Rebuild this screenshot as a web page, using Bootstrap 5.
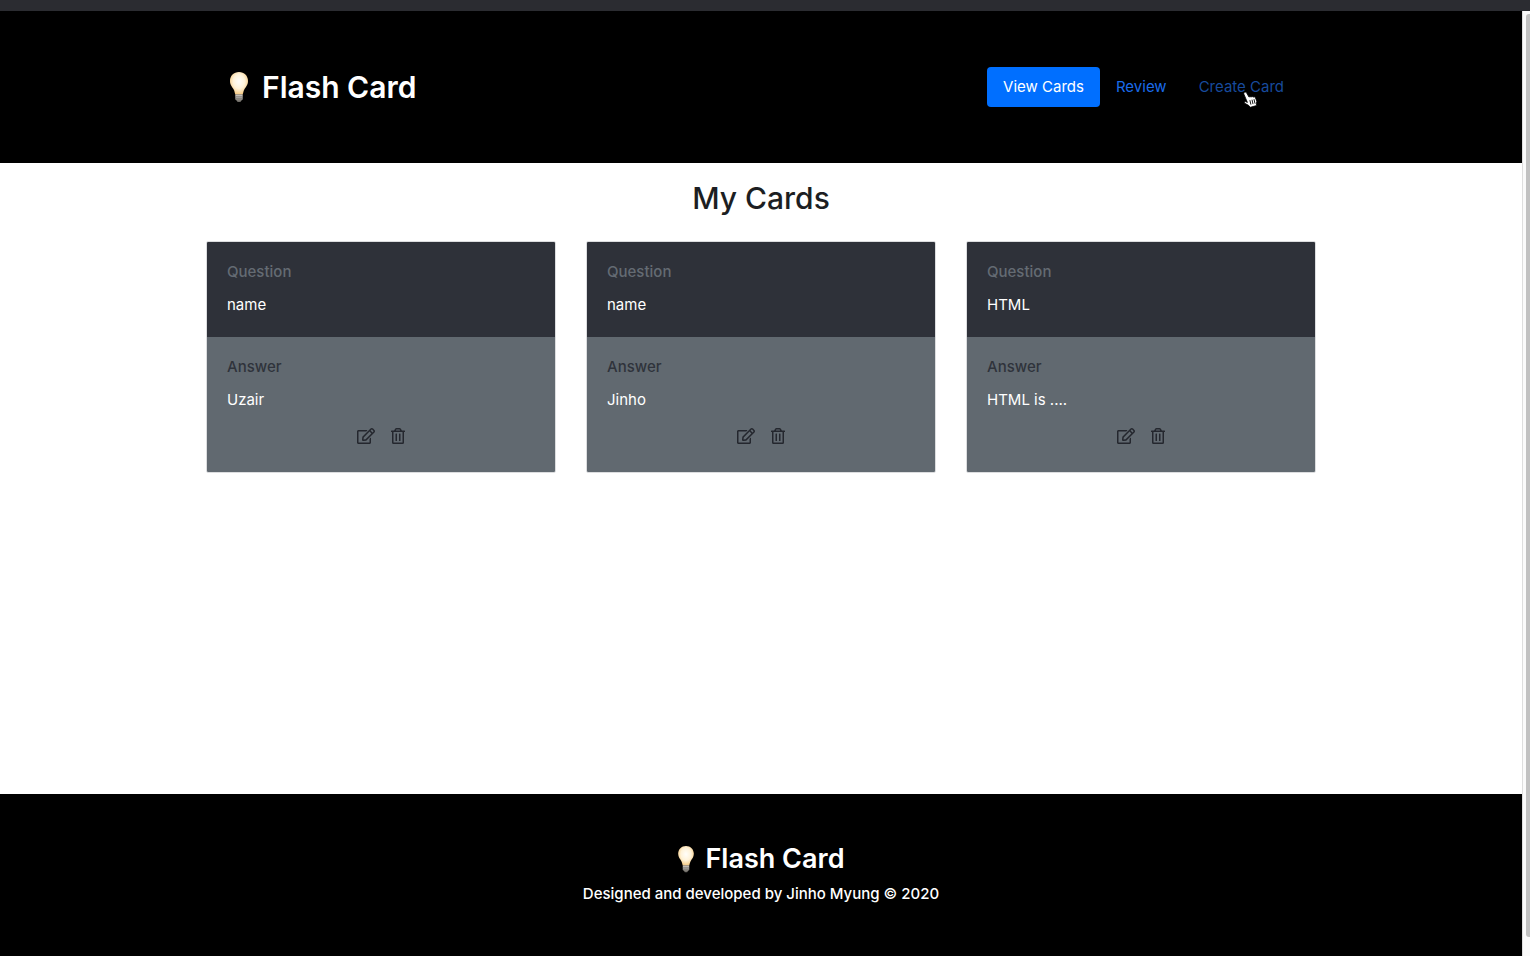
<!DOCTYPE html>
<html lang="en">
<head>
<meta charset="utf-8">
<meta name="viewport" content="width=device-width, initial-scale=1">
<title>Flash Card</title>
<link href="https://cdn.jsdelivr.net/npm/bootstrap@5.3.0/dist/css/bootstrap.min.css" rel="stylesheet">
<style>
  body { font-family: Inter, "Liberation Sans", sans-serif; font-size: 15px; line-height: 24px; color: #1c1e22; background: #fff; }
  .window-strip { height: 11px; background: #2b2c31; }
  .container { max-width: 1140px; --bs-gutter-x: 30px; }
  .site-header { background: #000; padding: 56px 0; }
  .brand { font-size: 30px; line-height: 38px; font-weight: 600; color: #fff; gap: 14px; }
  .brand-bulb { width: 18px; height: 31px; }
  .site-footer .brand { font-size: 27px; line-height: 34px; gap: 12px; }
  .site-footer .brand-bulb { width: 16px; height: 27px; }
  .nav-pills { --bs-nav-pills-border-radius: 4px; --bs-nav-link-color: #1a6bea; --bs-nav-link-hover-color: #174a9c; --bs-nav-pills-link-active-bg: #006fff; }
  .nav-pills .nav-link.hovered { color: #174a9c; }
  .page-title { font-size: 30px; line-height: 38px; font-weight: 500; }
  .card-row { --bs-gutter-x: 30px; }
  .flash { border-radius: 2px; border-color: #dcdddf; overflow: hidden; color: #fff; }
  .flash .card-body { padding: 20px; }
  .face-question { background: #2e3139; }
  .face-answer { background: #616970; }
  .face-title { font-size: 15px; line-height: 19px; font-weight: 500; margin-bottom: 12px; }
  .face-question .face-title { color: #646b73; }
  .face-answer .face-title { color: #2f333b; }
  .face-answer .btn { color: #24272e; line-height: 16px; }
  .site-footer { background: #000; color: #fff; padding: 48px 0 53px; }
  .credit { font-size: 15px; line-height: 19px; font-weight: 500; }
  .scroll-track { width: 8px; background: #fafafa; border-left: 1px solid #dedede; padding: 3px 0 19px 3px; }
  .scroll-thumb { background: #c1c1c1; border-radius: 3px 0 0 3px; }
  .pointer { width: 15px; height: 17px; left: 60px; top: 24px; }
</style>
</head>
<body class="d-flex flex-column min-vh-100">
<svg class="position-absolute" width="0" height="0" aria-hidden="true">
  <defs>
    <radialGradient id="glow" cx=".5" cy=".42" r=".58">
      <stop offset="0" stop-color="#fffefa"/><stop offset=".55" stop-color="#fff3d9"/><stop offset="1" stop-color="#f5c982"/>
    </radialGradient>
    <linearGradient id="base" x2="0" y2="1"><stop offset="0" stop-color="#d0cbc5"/><stop offset="1" stop-color="#68655f"/></linearGradient>
  </defs>
  <symbol id="bulb" viewBox="0 0 18 31">
    <path fill="url(#glow)" d="M9 0C3.800 0 0 3.800 0 9c0 4 2.300 6 3.700 8.500 1 1.900 1 3.500 1.600 5h7.400c.6-1.500.6-3.100 1.600-5C15.700 15 18 13 18 9c0-5.200-3.800-9-9-9z"/>
    <path fill="url(#base)" d="M5.300 22.500h7.400v5l-1.500 1.300L10.400 30H7.600l-.8-1.200-1.500-1.300z"/>
    <path stroke="#77736e" stroke-width=".6" d="M5.300 24.600h7.400M5.300 26.600h7.400"/>
  </symbol>
  <symbol id="edit" viewBox="0 0 576 512"><path fill="currentColor" d="M402.300 344.900l32-32c5-5 13.700-1.500 13.700 5.700V464c0 26.500-21.500 48-48 48H48c-26.500 0-48-21.500-48-48V112c0-26.500 21.500-48 48-48h273.500c7.100 0 10.700 8.600 5.700 13.700l-32 32c-1.500 1.500-3.500 2.300-5.700 2.300H48v352h352V350.500c0-2.100.8-4.100 2.300-5.600zm156.600-201.800L296.300 405.700l-90.400 10c-26.200 2.900-48.500-19.200-45.600-45.600l10-90.400L432.900 17.100c22.900-22.900 59.900-22.900 82.700 0l43.200 43.200c22.900 22.900 22.900 60 .1 82.800zM460.100 174L402 115.900 216.200 301.800l-7.300 65.300 65.300-7.300L460.100 174zm64.800-79.700l-43.200-43.200c-4.100-4.100-10.800-4.100-14.800 0L436 82l58.100 58.100 30.900-30.900c4-4.200 4-10.800-.1-14.900z"/></symbol>
  <symbol id="trash" viewBox="0 0 448 512"><path fill="currentColor" d="M268 416h24a12 12 0 0 0 12-12V188a12 12 0 0 0-12-12h-24a12 12 0 0 0-12 12v216a12 12 0 0 0 12 12zM432 80h-82.410l-34-56.700A48 48 0 0 0 274.410 0H173.590a48 48 0 0 0-41.160 23.300L98.410 80H16A16 16 0 0 0 0 96v16a16 16 0 0 0 16 16h16v336a48 48 0 0 0 48 48h288a48 48 0 0 0 48-48V128h16a16 16 0 0 0 16-16V96a16 16 0 0 0-16-16zM171.840 50.910A6 6 0 0 1 177 48h94a6 6 0 0 1 5.150 2.910L293.610 80H154.390zM368 464H80V128h288zm-212-48h24a12 12 0 0 0 12-12V188a12 12 0 0 0-12-12h-24a12 12 0 0 0-12 12v216a12 12 0 0 0 12 12z"/></symbol>
</svg>

<div class="window-strip"></div>
<div class="d-flex flex-grow-1">
  <div class="d-flex flex-column flex-grow-1">
    <header class="site-header">
      <div class="container">
        <div class="d-flex flex-wrap justify-content-between align-items-center px-3">
          <h1 class="brand d-flex align-items-center mb-0 ms-2"><svg class="brand-bulb" aria-hidden="true"><use href="#bulb"/></svg>Flash Card</h1>
          <nav class="nav nav-pills" aria-label="Main">
            <a class="nav-link active" aria-current="page" href="#view">View Cards</a>
            <a class="nav-link" href="#review">Review</a>
            <a class="nav-link hovered position-relative" href="#create">Create Card
              <svg class="pointer position-absolute" viewBox="0 0 15 17" aria-hidden="true"><path fill="#fff" stroke="#000" stroke-width=".8" d="M1.200 1.500c.9-.8 1.900-.4 2.500.6l2.300 4 .9-.6 1.200.5 1-.6 1.200.7 1-.3 1.300 1.200 1.200 3.400-.5 2.300.4 1.800-6.400 1.800-1.800-2L1.700 12.300c-.9-.9.200-2.100 1.200-1.600l1.500.7L1 3.400c-.3-.7-.3-1.400.2-1.900z"/><path stroke="#000" stroke-width=".9" d="M6.900 9.200l1 4.400M9 8.700l1 4.400M11 8.200l1 4.400"/></svg>
            </a>
          </nav>
        </div>
      </div>
    </header>

    <main class="container flex-grow-1 pt-3">
      <h2 class="page-title text-center mb-4">My Cards</h2>
      <div class="row card-row row-cols-1 row-cols-md-3">
        <div class="col">
          <article class="card flash">
            <div class="card-body face-question"><h3 class="face-title">Question</h3><p class="mb-0">name</p></div>
            <div class="card-body face-answer"><h3 class="face-title">Answer</h3><p class="mb-0">Uzair</p>
              <div class="d-flex justify-content-center gap-3 pt-3 pb-2"><button type="button" class="btn border-0 p-0 d-flex" aria-label="Edit card"><svg width="18" height="16"><use href="#edit"/></svg></button><button type="button" class="btn border-0 p-0 d-flex" aria-label="Delete card"><svg width="14" height="16"><use href="#trash"/></svg></button></div>
            </div>
          </article>
        </div>
        <div class="col">
          <article class="card flash">
            <div class="card-body face-question"><h3 class="face-title">Question</h3><p class="mb-0">name</p></div>
            <div class="card-body face-answer"><h3 class="face-title">Answer</h3><p class="mb-0">Jinho</p>
              <div class="d-flex justify-content-center gap-3 pt-3 pb-2"><button type="button" class="btn border-0 p-0 d-flex" aria-label="Edit card"><svg width="18" height="16"><use href="#edit"/></svg></button><button type="button" class="btn border-0 p-0 d-flex" aria-label="Delete card"><svg width="14" height="16"><use href="#trash"/></svg></button></div>
            </div>
          </article>
        </div>
        <div class="col">
          <article class="card flash">
            <div class="card-body face-question"><h3 class="face-title">Question</h3><p class="mb-0">HTML</p></div>
            <div class="card-body face-answer"><h3 class="face-title">Answer</h3><p class="mb-0">HTML is ....</p>
              <div class="d-flex justify-content-center gap-3 pt-3 pb-2"><button type="button" class="btn border-0 p-0 d-flex" aria-label="Edit card"><svg width="18" height="16"><use href="#edit"/></svg></button><button type="button" class="btn border-0 p-0 d-flex" aria-label="Delete card"><svg width="14" height="16"><use href="#trash"/></svg></button></div>
            </div>
          </article>
        </div>
      </div>
    </main>

    <footer class="site-footer text-center">
      <p class="brand d-flex justify-content-center align-items-center mb-2"><svg class="brand-bulb" aria-hidden="true"><use href="#bulb"/></svg>Flash Card</p>
      <p class="credit mb-0">Designed and developed by Jinho Myung © 2020</p>
    </footer>
  </div>
  <div class="scroll-track d-flex flex-shrink-0" aria-hidden="true"><div class="scroll-thumb flex-grow-1"></div></div>
</div>
<script src="https://cdn.jsdelivr.net/npm/bootstrap@5.3.0/dist/js/bootstrap.bundle.min.js"></script>
</body>
</html>
